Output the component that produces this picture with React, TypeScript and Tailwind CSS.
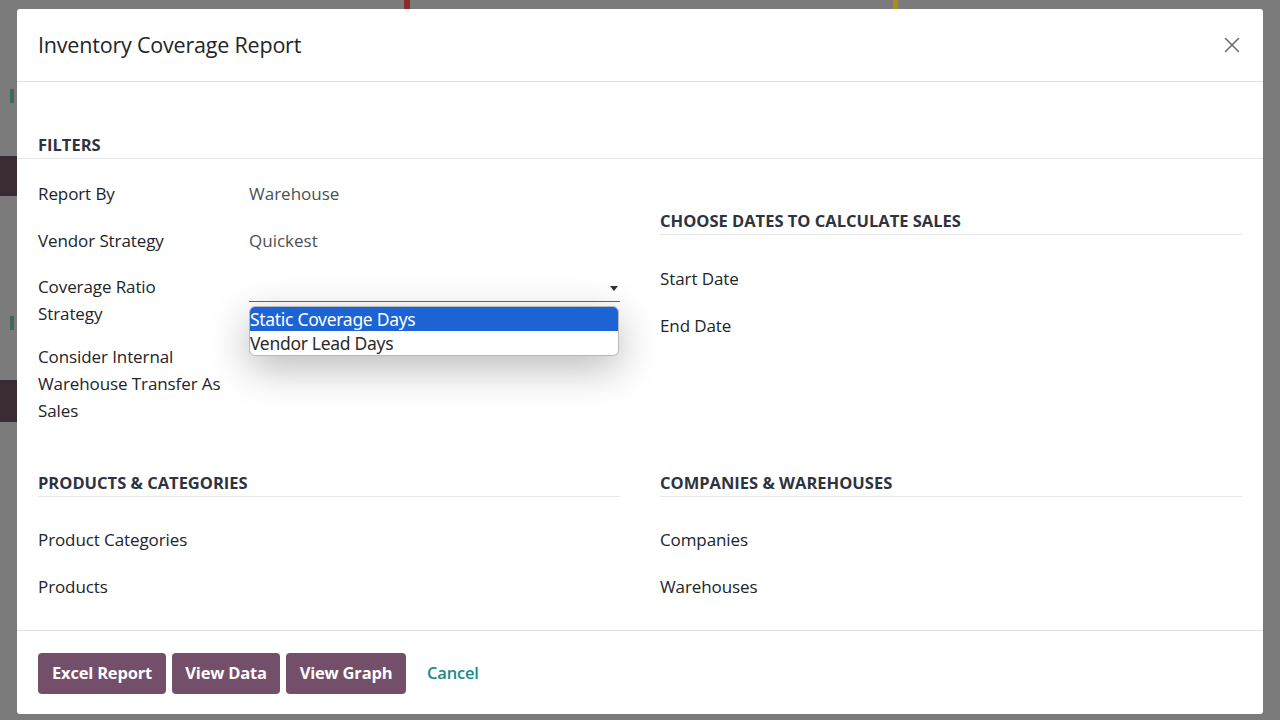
import { X } from 'lucide-react';

const FONT = "font-['Open_Sans','Noto_Sans',sans-serif]";

function SectionTitle({ children }: { children: string }) {
  return (
    <div className="border-b border-[#e5e7eb] pb-[1px]">
      <div className="text-[16.5px] leading-[24px] font-bold text-[#2e3340]">{children}</div>
    </div>
  );
}

function Row({ label, children, className = '' }: { label: React.ReactNode; children?: React.ReactNode; className?: string }) {
  return (
    <div className={`flex ${className}`}>
      <div className="w-[211px] shrink-0 text-[17px] leading-[27px] font-medium text-[#212529] tracking-[-0.1px]">{label}</div>
      <div className="flex-1 text-[17px] leading-[27px] text-[#4b5056]">{children}</div>
    </div>
  );
}

function StrategySelect() {
  return (
    <div className="relative w-[371px]">
      <div className="h-[29px] border-b-[1.5px] border-[#1b8a8f] flex items-center justify-end pr-[2px]">
        <svg width="8" height="5" viewBox="0 0 8 5" className="mt-[2px]">
          <path d="M0 0 L8 0 L4 5 Z" fill="#333" />
        </svg>
      </div>
      <div className="absolute left-0 top-[33px] w-[370px] z-10 bg-white border border-[#b9b9b9] rounded-[6px] overflow-hidden shadow-[0_12px_40px_rgba(0,0,0,0.28)] font-['Noto_Sans',sans-serif]">
        <div className="h-[24px] leading-[24px] bg-[#1c64d6] text-white text-[17.5px] tracking-[-0.3px]">Static Coverage Days</div>
        <div className="h-[24px] leading-[24px] text-[#2b2b2b] text-[17.5px] tracking-[-0.3px]">Vendor Lead Days</div>
      </div>
    </div>
  );
}

export default function App() {
  return (
    <div className={`w-[1280px] h-[720px] bg-[#7b7b7b] flex flex-col overflow-hidden ${FONT}`}>
      {/* page behind the dialog */}
      <div className="h-[9px] flex shrink-0">
        <div className="w-[404px]" />
        <div className="w-[6px] bg-[#8a2b2b]" />
        <div className="w-[483px]" />
        <div className="w-[5px] bg-[#b08a1a]" />
      </div>
      <div className="flex flex-1">
        <div className="w-[17px] shrink-0 flex flex-col">
          <div className="h-[80px]" />
          <div className="h-[14px] w-[4px] ml-[10px] bg-[#3d6b5a]" />
          <div className="h-[53px]" />
          <div className="h-[40px] bg-[#3b2b34]" />
          <div className="h-[120px]" />
          <div className="h-[14px] w-[4px] ml-[10px] bg-[#3d6b5a]" />
          <div className="h-[50px]" />
          <div className="h-[42px] bg-[#3b2b34]" />
        </div>

        {/* dialog */}
        <div className="w-[1246px] h-[705px] bg-white rounded-[3px] flex flex-col">
          <div className="h-[73px] shrink-0 flex items-center justify-between pl-[21px] pr-[18px] border-b border-[#dee2e6]">
            <div className="text-[21.5px] text-[#212529] tracking-[-0.2px]">Inventory Coverage Report</div>
            <X className="w-[26px] h-[26px] text-[#6c6c6c]" strokeWidth={1.4} />
          </div>

          <div className="flex-1 flex flex-col">
            <div className="pt-[51px] border-b border-[#e5e7eb] px-[21px]">
              <div className="text-[16.5px] leading-[24px] font-bold text-[#2e3340] pb-[1px]">FILTERS</div>
            </div>

            <div className="grid grid-cols-2 gap-x-[40px] px-[21px]">
              <div className="pt-[21px] flex flex-col">
                <Row label="Report By" className="mb-[20px]">Warehouse</Row>
                <Row label="Vendor Strategy" className="mb-[19px]">Quickest</Row>
                <Row label={<>Coverage Ratio<br />Strategy</>} className="mb-[16px]">
                  <StrategySelect />
                </Row>
                <Row label={<>Consider Internal<br />Warehouse Transfer As<br />Sales</>}>
                  <div className="w-[16px] h-[16px] border border-[#9a9a9a] rounded-[2px] mt-[-6px]" />
                </Row>
              </div>
              <div className="pt-[50px] flex flex-col">
                <SectionTitle>CHOOSE DATES TO CALCULATE SALES</SectionTitle>
                <div className="h-[30px]" />
                <Row label="Start Date" className="mb-[20px]" />
                <Row label="End Date" />
              </div>
            </div>

            <div className="grid grid-cols-2 gap-x-[40px] px-[21px] mt-[47px]">
              <div className="flex flex-col">
                <SectionTitle>PRODUCTS &amp; CATEGORIES</SectionTitle>
                <div className="h-[29px]" />
                <Row label="Product Categories" className="mb-[20px]" />
                <Row label="Products" />
              </div>
              <div className="flex flex-col">
                <SectionTitle>COMPANIES &amp; WAREHOUSES</SectionTitle>
                <div className="h-[29px]" />
                <Row label="Companies" className="mb-[20px]" />
                <Row label="Warehouses" />
              </div>
            </div>
          </div>

          <div className="h-[84px] shrink-0 border-t border-[#dee2e6] flex items-center gap-[6px] pl-[21px] pt-[1px]">
            <button className="h-[41px] w-[128px] rounded-[4px] bg-[#744f69] text-white text-[16.5px] font-bold tracking-[-0.2px]">Excel Report</button>
            <button className="h-[41px] w-[108px] rounded-[4px] bg-[#744f69] text-white text-[16.5px] font-bold tracking-[-0.2px]">View Data</button>
            <button className="h-[41px] w-[120px] rounded-[4px] bg-[#744f69] text-white text-[16.5px] font-bold tracking-[-0.2px]">View Graph</button>
            <button className="h-[41px] px-[15px] text-[#1b8a8f] text-[16.5px] font-semibold tracking-[-0.2px]">Cancel</button>
          </div>
        </div>
      </div>
    </div>
  );
}
